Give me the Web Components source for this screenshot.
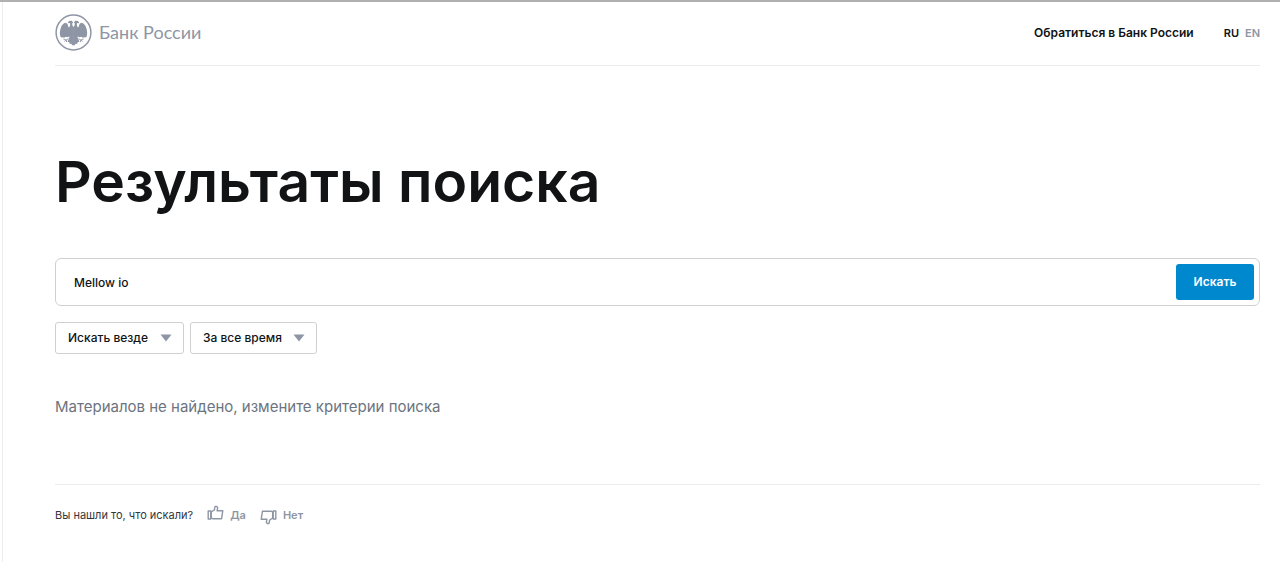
<!DOCTYPE html>
<html lang="ru">
<head>
<meta charset="utf-8">
<meta name="viewport" content="width=device-width, initial-scale=1">
<title>Результаты поиска | Банк России</title>
<style>
  body {
    margin: 0;
    background: #fff;
    color: #111314;
    font-family: Inter, "Liberation Sans", sans-serif;
    --muted: #8e96a5;
    --line: #ededee;
    --border: #cfd0d2;
    --accent: #0088cf;
  }
</style>
</head>
<body>
<search-page>
  <site-header slot="header"></site-header>
  <page-title>Результаты поиска</page-title>
  <search-box value="Mellow io"></search-box>
  <filter-bar>
    <filter-select label="Где искать" option="Искать везде"></filter-select>
    <filter-select label="Период" option="За все время"></filter-select>
  </filter-bar>
  <empty-result>Материалов не найдено, измените критерии поиска</empty-result>
  <feedback-bar slot="footer">
    Вы нашли то, что искали?
    <vote-button slot="votes" kind="up">Да</vote-button>
    <vote-button slot="votes" kind="down">Нет</vote-button>
  </feedback-bar>
</search-page>

<script>
class Base extends HTMLElement {
  constructor() {
    super();
    this.attachShadow({ mode: 'open' });
  }
  connectedCallback() {
    this.shadowRoot.innerHTML = this.render();
  }
}

customElements.define('search-page', class extends Base {
  render() {
    return `<style>
      :host { display: block; box-sizing: border-box; min-height: 100vh; border-top: 2px solid #b0b0b0; padding-left: 2px; }
      .frame { box-sizing: border-box; min-height: calc(100vh - 2px); border-left: 1px solid #ededee; padding: 0 20px 0 52px; }
      main { display: block; padding: 84px 0 65px; }
    </style>
    <div class="frame">
      <slot name="header"></slot>
      <main><slot></slot></main>
      <slot name="footer"></slot>
    </div>`;
  }
});

customElements.define('bank-logo', class extends Base {
  render() {
    return `<style>
      :host { display: block; }
      a { display: flex; align-items: center; gap: 7px; color: var(--muted); text-decoration: none; font: 18px/24px Lato, "Open Sans", sans-serif; }
      svg { display: block; width: 37px; height: 37px; }
      span { padding-bottom: 2px; }
    </style>
    <a href="#">
      <svg viewBox="0 0 37 37" aria-hidden="true">
        <defs>
          <g id="half">
            <path d="M18.800 13L18.500 13 17.400 11.500 17.200 9.500 18.100 8.400 16.800 6.700 14.700 6.700 13.300 7.700 12.700 9.200 14.600 9.100 15.200 9.800 14.900 12 14 13.400 13.300 12.800 12.600 10.200 11 8.700 9 9.200 6.700 11.600 5.400 15 4.800 19 5.300 22.400 6.400 23.600 7.800 23.200 9.200 23.800 10.800 22.800 12.400 23.200 14.400 22.600 14.200 24.400 13 26.400 12.600 28 14.200 28 14.800 30 16.400 29.700 17.200 31.200 18.800 31.200z"/>
            <path d="M13.600 24.600L11.200 26 8.400 25M11.200 26L9.300 27.500M11.200 26L11.600 28" fill="none" stroke="currentColor" stroke-width=".9"/>
          </g>
        </defs>
        <circle cx="18.5" cy="18.5" r="17.4" fill="none" stroke="currentColor" stroke-width="1.5"/>
        <g fill="currentColor">
          <use href="#half"/>
          <use href="#half" transform="matrix(-1 0 0 1 37 0)"/>
        </g>
      </svg>
      <span>Банк России</span>
    </a>`;
  }
});

customElements.define('site-header', class extends Base {
  render() {
    return `<style>
      :host { display: block; }
      header { display: flex; align-items: center; justify-content: space-between; box-sizing: border-box; height: 64px; padding-bottom: 2px; border-bottom: 1px solid var(--line); }
      nav { display: flex; align-items: center; gap: 30px; font-weight: 600; font-size: 12px; line-height: 16px; }
      .lang { display: flex; gap: 6px; font-size: 11px; }
      a { color: inherit; text-decoration: none; }
      .off { color: var(--muted); }
    </style>
    <header>
      <bank-logo></bank-logo>
      <nav>
        <a href="#">Обратиться в Банк России</a>
        <div class="lang"><a href="#">RU</a><a class="off" href="#">EN</a></div>
      </nav>
    </header>`;
  }
});

customElements.define('page-title', class extends Base {
  render() {
    return `<style>
      :host { display: block; }
      h1 { margin: 0 0 44px; font-weight: 600; font-size: 57px; line-height: 64px; }
    </style><h1><slot></slot></h1>`;
  }
});

customElements.define('search-box', class extends Base {
  render() {
    return `<style>
      :host { display: block; }
      form { display: flex; box-sizing: border-box; height: 48px; padding: 5px; border: 1px solid var(--border); border-radius: 6px; }
      input { flex: 1; min-width: 0; border: 0; outline: 0; padding: 2px 13px 0; background: none; color: inherit; font: 500 12px/16px Inter, sans-serif; }
      button { border: 0; border-radius: 3px; width: 78px; background: var(--accent); color: #fff; padding: 0; font: 600 12px/16px Inter, sans-serif; }
    </style>
    <form role="search" onsubmit="return false">
      <input type="text" aria-label="Поиск" value="${this.getAttribute('value')}">
      <button type="submit">Искать</button>
    </form>`;
  }
});

customElements.define('filter-bar', class extends Base {
  render() {
    return `<style>
      :host { display: flex; flex-wrap: wrap; gap: 6px; margin: 16px 0 41px; }
    </style><slot></slot>`;
  }
});

customElements.define('filter-select', class extends Base {
  render() {
    return `<style>
      :host { display: block; }
      label { display: grid; align-items: center; }
      select, svg { grid-area: 1 / 1; }
      select { appearance: none; height: 32px; margin: 0; padding: 0 34px 0 12px; border: 1px solid var(--border); border-radius: 3px; background: #fff; color: inherit; font: 500 12px/16px Inter, sans-serif; }
      svg { justify-self: end; margin-right: 12px; width: 12px; height: 8px; pointer-events: none; fill: var(--muted); }
    </style>
    <label>
      <select aria-label="${this.getAttribute('label')}"><option>${this.getAttribute('option')}</option></select>
      <svg viewBox="0 0 12 8" aria-hidden="true"><path d="M.5 .5h11L6 7.500z"/></svg>
    </label>`;
  }
});

customElements.define('empty-result', class extends Base {
  render() {
    return `<style>
      :host { display: block; }
      p { margin: 0; color: #6c7480; font-size: 15px; line-height: 24px; }
    </style><p><slot></slot></p>`;
  }
});

customElements.define('vote-button', class extends Base {
  render() {
    const flip = this.getAttribute('kind') === 'down';
    return `<style>
      :host { display: block; }
      button { display: flex; align-items: center; gap: 6px; border: 0; padding: 0; background: none; color: var(--muted); font: 600 11px/16px Inter, sans-serif; }
      svg { display: block; width: 17px; height: 16px; margin: ${flip ? '4px 0 0' : '0 0 4px'}; }
    </style>
    <button type="button">
      <svg viewBox="0 0 17 16" aria-hidden="true" fill="none" stroke="currentColor" stroke-width="1.4" stroke-linejoin="round">
        <g ${flip ? 'transform="rotate(180 8.5 8)"' : ''}>
          <path d="M1.200 6h2.600v8H1.200z"/>
          <path d="M4.300 13.200V6.800l3-1.800 .8-3.600h1.600l1 1.300-.6 3h5.700l-1.200 8H5.600z"/>
        </g>
      </svg>
      <span><slot></slot></span>
    </button>`;
  }
});

customElements.define('feedback-bar', class extends Base {
  render() {
    return `<style>
      :host { display: block; }
      footer { display: flex; align-items: center; gap: 14px; padding: 20px 0 36px; border-top: 1px solid var(--line); font-size: 11px; line-height: 16px; color: #33363a; }
      .votes { display: flex; align-items: center; gap: 14px; }
    </style>
    <footer>
      <span><slot></slot></span>
      <div class="votes"><slot name="votes"></slot></div>
    </footer>`;
  }
});
</script>
</body>
</html>
